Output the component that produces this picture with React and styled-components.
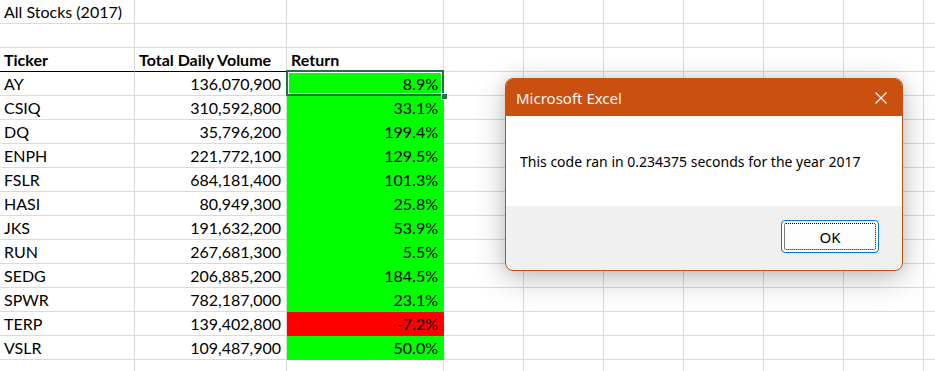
import React from "react";
import styled, { createGlobalStyle, css } from "styled-components";

const GlobalStyle = createGlobalStyle`
  html, body {
    margin: 0;
    padding: 0;
    background: #ffffff;
  }
  body {
    width: 935px;
    height: 371px;
    overflow: hidden;
  }
`;

const GREEN = "#00ff00";
const RED = "#ff0000";
const GRID = "#dadada";

const Page = styled.div`
  position: relative;
  width: 935px;
  height: 371px;
  overflow: hidden;
`;

const Sheet = styled.div`
  display: grid;
  grid-template-columns: 135px 152px 157px repeat(8, 80px);
  grid-auto-rows: 24px;
  font-family: Lato, "Liberation Sans", sans-serif;
  font-size: 16px;
  color: #000;
`;

const Cell = styled.div`
  box-sizing: border-box;
  position: relative;
  display: flex;
  align-items: center;
  justify-content: ${(p) => (p.$right ? "flex-end" : "flex-start")};
  padding: 1px ${(p) => (p.$right ? "5px" : "4px")} 0 4px;
  border-right: 1px solid ${GRID};
  border-bottom: 1px solid ${GRID};
  line-height: 22px;
  white-space: nowrap;
  font-weight: ${(p) => (p.$bold ? 700 : 400)};

  ${(p) =>
    p.$fill &&
    css`
      background: ${p.$fill};
      border-right-color: ${p.$fill};
      border-bottom-color: ${p.$fill};
    `}

  ${(p) =>
    p.$underline &&
    css`
      border-bottom-color: #000;
    `}

  ${(p) =>
    p.$active &&
    css`
      z-index: 2;
      &::after {
        content: "";
        position: absolute;
        left: -1px;
        right: -1px;
        top: -2px;
        bottom: -1px;
        border: 2px solid #217346;
        box-shadow: inset 0 0 0 1px #ffffff;
        pointer-events: none;
      }
      &::before {
        content: "";
        position: absolute;
        right: -5px;
        bottom: -5px;
        width: 7px;
        height: 7px;
        box-sizing: border-box;
        background: #217346;
        border: 1px solid #ffffff;
        z-index: 3;
      }
    `}
`;

const stocks = [
  ["AY", "136,070,900", "8.9%"],
  ["CSIQ", "310,592,800", "33.1%"],
  ["DQ", "35,796,200", "199.4%"],
  ["ENPH", "221,772,100", "129.5%"],
  ["FSLR", "684,181,400", "101.3%"],
  ["HASI", "80,949,300", "25.8%"],
  ["JKS", "191,632,200", "53.9%"],
  ["RUN", "267,681,300", "5.5%"],
  ["SEDG", "206,885,200", "184.5%"],
  ["SPWR", "782,187,000", "23.1%"],
  ["TERP", "139,402,800", "-7.2%"],
  ["VSLR", "109,487,900", "50.0%"],
];

const EXTRA_COLS = 8;

const Blanks = ({ count }) =>
  Array.from({ length: count }, (_, i) => <Cell key={`b${i}`} />);

// message box
const Dialog = styled.div`
  position: absolute;
  left: 505px;
  top: 78px;
  width: 398px;
  height: 193px;
  box-sizing: border-box;
  display: flex;
  flex-direction: column;
  border: 1px solid #ca5010;
  border-radius: 8px;
  overflow: hidden;
  background: #f0f0f0;
  box-shadow: 0 8px 32px rgba(0, 0, 0, 0.24), 0 0 14px rgba(0, 0, 0, 0.1);
  font-family: "Noto Sans", "Open Sans", sans-serif;
  color: #000;
`;

const TitleBar = styled.div`
  height: 37px;
  flex: none;
  display: flex;
  align-items: center;
  justify-content: space-between;
  padding: 0 15px 0 10px;
  background: #ca5010;
  color: #fff6f8;
  font-size: 15px;
`;

const CloseIcon = () => (
  <svg width="12" height="12" viewBox="0 0 12 12">
    <path d="M0.5 0.5 L11.5 11.5 M11.5 0.5 L0.5 11.5" stroke="#ffffff" strokeWidth="1.1" />
  </svg>
);

const Body = styled.div`
  height: 90px;
  flex: none;
  display: flex;
  align-items: center;
  padding: 0 14px;
  background: #ffffff;
  font-size: 14px;
`;

const Footer = styled.div`
  flex: 1;
  display: flex;
  justify-content: flex-end;
  align-items: flex-start;
  padding: 14px 23px 0 0;
`;

const OkButton = styled.button`
  position: relative;
  width: 98px;
  height: 33px;
  box-sizing: border-box;
  border: 1px solid #0078d4;
  border-radius: 4px;
  background: #fdfdfd;
  font-family: "Noto Sans", "Open Sans", sans-serif;
  font-size: 15px;
  color: #000;
  padding: 0;
  &::after {
    content: "";
    position: absolute;
    inset: 2px;
    border: 1px dotted #000;
    border-radius: 2px;
  }
`;

export default function App() {
  return (
    <Page>
      <GlobalStyle />
      <Sheet>
        <Cell>All Stocks (2017)</Cell>
        <Blanks count={2 + EXTRA_COLS} />

        <Blanks count={3 + EXTRA_COLS} />

        <Cell $bold $underline>Ticker</Cell>
        <Cell $bold $underline>Total Daily Volume</Cell>
        <Cell $bold $underline>Return</Cell>
        <Blanks count={EXTRA_COLS} />

        {stocks.map(([ticker, volume, ret], i) => (
          <React.Fragment key={ticker}>
            <Cell>{ticker}</Cell>
            <Cell $right>{volume}</Cell>
            <Cell $right $fill={ret.startsWith("-") ? RED : GREEN} $active={i === 0}>
              {ret}
            </Cell>
            <Blanks count={EXTRA_COLS} />
          </React.Fragment>
        ))}

        <Blanks count={3 + EXTRA_COLS} />
      </Sheet>

      <Dialog>
        <TitleBar>
          <span>Microsoft Excel</span>
          <CloseIcon />
        </TitleBar>
        <Body>This code ran in 0.234375 seconds for the year 2017</Body>
        <Footer>
          <OkButton>OK</OkButton>
        </Footer>
      </Dialog>
    </Page>
  );
}
